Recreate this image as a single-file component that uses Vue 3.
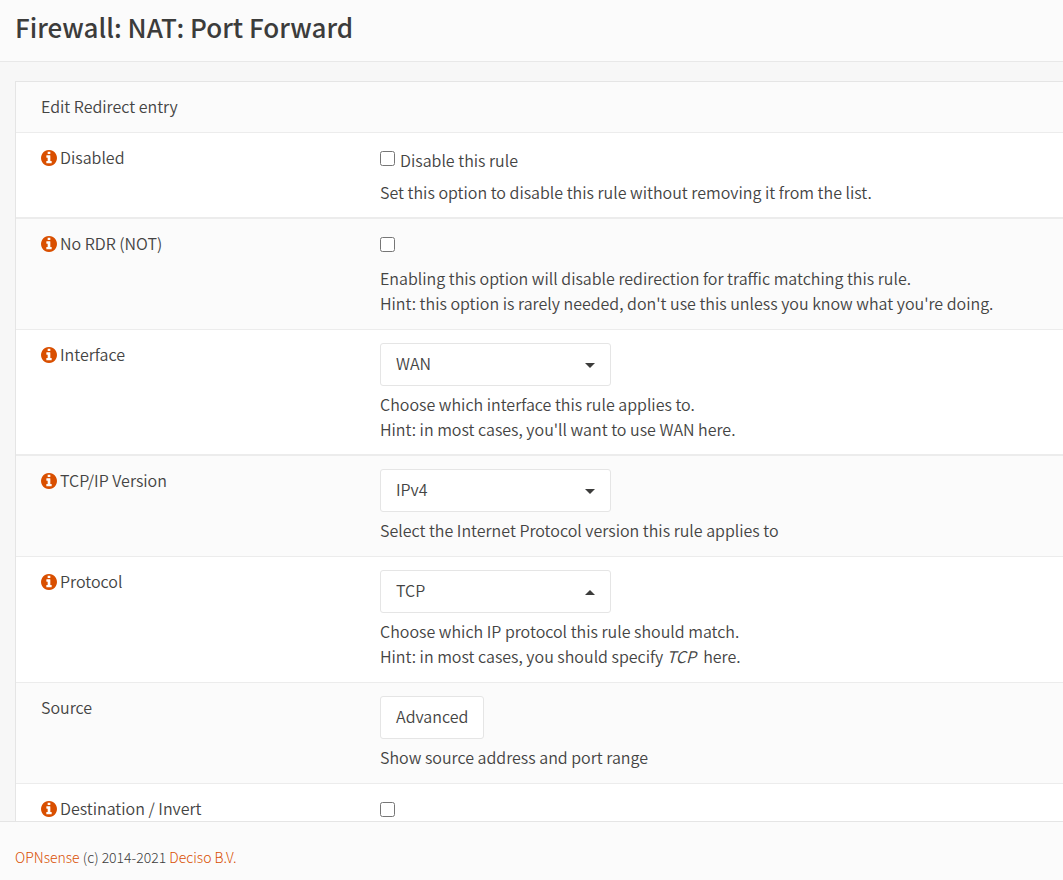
<script setup>
import { ref } from 'vue'

const disabled = ref(false)
const noRdr = ref(false)
const invert = ref(false)

const rows = [
  { id: 'disabled', label: 'Disabled', info: true, type: 'check', model: disabled, text: 'Disable this rule', thick: true,
    help: ['Set this option to disable this rule without removing it from the list.'] },
  { id: 'nordr', label: 'No RDR (NOT)', info: true, type: 'check', model: noRdr,
    help: ['Enabling this option will disable redirection for traffic matching this rule.', "Hint: this option is rarely needed, don't use this unless you know what you're doing."] },
  { id: 'interface', label: 'Interface', info: true, type: 'select', options: ['WAN', 'LAN'], thick: true,
    help: ['Choose which interface this rule applies to.', "Hint: in most cases, you'll want to use WAN here."] },
  { id: 'ipprotocol', label: 'TCP/IP Version', info: true, type: 'select', options: ['IPv4', 'IPv6', 'IPv4+IPv6'],
    help: ['Select the Internet Protocol version this rule applies to'] },
  { id: 'protocol', label: 'Protocol', info: true, type: 'select', open: true, options: ['TCP', 'UDP', 'TCP/UDP'],
    help: ['Choose which IP protocol this rule should match.'], hint: true },
  { id: 'source', label: 'Source', type: 'button', text: 'Advanced', help: ['Show source address and port range'] },
  { id: 'invert', label: 'Destination / Invert', info: true, type: 'check', model: invert, help: [] },
]
</script>

<template>
  <div class="page">
    <header class="page-head">
      <h1>Firewall: NAT: Port Forward</h1>
    </header>

    <main class="content">
      <form class="panel" @submit.prevent>
        <div class="panel-head">Edit Redirect entry</div>
        <div v-for="row in rows" :key="row.id" class="row" :class="{ thick: row.thick }">
          <div class="name">
            <svg v-if="row.info" class="info" viewBox="0 128 1536 1536" aria-hidden="true">
              <path d="M1024 1376v-160q0-14-9-23t-23-9h-96v-512q0-14-9-23t-23-9h-320q-14 0-23 9t-9 23v160q0 14 9 23t23 9h96v320h-96q-14 0-23 9t-9 23v160q0 14 9 23t23 9h448q14 0 23-9t9-23zm-128-896v-160q0-14-9-23t-23-9h-192q-14 0-23 9t-9 23v160q0 14 9 23t23 9h192q14 0 23-9t9-23zm640 416q0 209-103 385.5t-279.5 279.5-385.5 103-385.5-103-279.5-279.5-103-385.5 103-385.5 279.5-279.5 385.5-103 385.5 103 279.5 279.5 103 385.5z" />
            </svg>
            <label :for="row.id">{{ row.label }}</label>
          </div>
          <div class="field">
            <div v-if="row.type === 'check'" class="check">
              <input :id="row.id" v-model="row.model.value" type="checkbox">
              <label v-if="row.text" class="check-text" :for="row.id">{{ row.text }}</label>
            </div>
            <div v-else-if="row.type === 'select'" class="select">
              <select :id="row.id">
                <option v-for="o in row.options" :key="o">{{ o }}</option>
              </select>
              <svg class="caret" :class="{ up: row.open }" viewBox="0 0 10 5" aria-hidden="true"><path d="M0 0h10L5 5z" /></svg>
            </div>
            <button v-else :id="row.id" type="button">{{ row.text }}</button>
            <div v-if="row.help.length" class="help">
              <div v-for="line in row.help" :key="line">{{ line }}</div>
              <div v-if="row.hint">Hint: in most cases, you should specify <em>TCP</em>&nbsp; here.</div>
            </div>
          </div>
        </div>
      </form>
    </main>

    <footer class="page-foot">
      <a href="#">OPNsense</a> (c) 2014-2021 <a href="#">Deciso B.V.</a>
    </footer>
  </div>
</template>

<style>
body {
  margin: 0;
  background: #f7f7f7;
}
</style>

<style scoped>
.page {
  display: flex;
  flex-direction: column;
  height: 100vh;
  overflow: hidden;
  color: #3c3c3b;
  font-family: "Noto Sans CJK SC", "Noto Sans", sans-serif;
  font-size: 16px;
  font-weight: 350;
  line-height: 25px;
}
.page-head {
  flex: none;
  padding: 12px 15px 19px;
  background: #fbfbfb;
  border-bottom: 1px solid #e8e8e8;
}
h1 {
  margin: 0;
  font-size: 26px;
  font-weight: 500;
  line-height: 30px;
}
.content {
  flex: 1;
  min-height: 0;
  overflow: hidden;
  padding: 19px 0 0 15px;
}
.panel {
  border: solid #e5e5e5;
  border-width: 1px 0 0 1px;
  background: #fff;
  color: #444443;
}
.panel-head {
  padding: 12px 25px 13px;
  background: #fbfbfb;
  border-bottom: 1px solid #ececec;
}
.row {
  display: grid;
  grid-template-columns: 339px 1fr;
  padding: 12px 0 13px 25px;
  border-bottom: 1px solid #ececec;
}
.row:nth-child(odd) {
  background: #fbfbfb;
}
.row.thick {
  padding-bottom: 12px;
  border-bottom-width: 2px;
}
.name {
  display: flex;
  align-items: flex-start;
  gap: 3px;
}
.info {
  width: 16px;
  height: 16px;
  margin-top: 5px;
  fill: #d94f00;
}
.check {
  display: flex;
  align-items: center;
  gap: 5px;
  height: 27px;
}
input {
  width: 15px;
  height: 15px;
  margin: 0;
}
.check-text {
  padding-top: 4px;
}
.check + .help {
  margin-top: 8px;
}
.help {
  margin-top: 6px;
}
.select {
  position: relative;
  width: 231px;
}
select,
button {
  display: block;
  height: 43px;
  margin: 1px 0 0;
  padding: 0 15px 3px;
  border: 1px solid #e5e5e5;
  border-radius: 3px;
  background: #fff;
  color: inherit;
  font: inherit;
}
select {
  width: 100%;
  appearance: none;
}
.caret {
  position: absolute;
  right: 16px;
  top: 20px;
  width: 10px;
  height: 5px;
  fill: #3c3c3b;
  pointer-events: none;
}
.caret.up {
  transform: rotate(180deg);
}
.page-foot {
  flex: none;
  padding: 23px 15px 10px;
  background: #fbfbfb;
  border-top: 1px solid #e5e5e5;
  font-size: 14px;
  font-weight: 300;
}
a {
  color: #d94f00;
  text-decoration: none;
}
</style>
